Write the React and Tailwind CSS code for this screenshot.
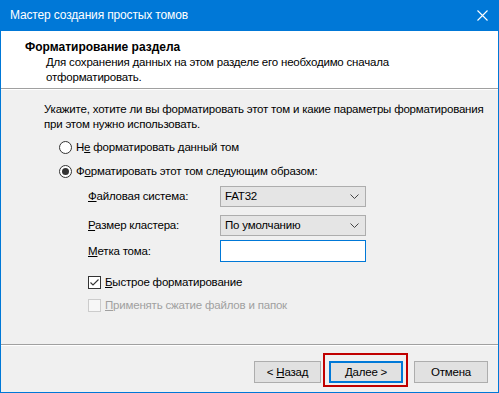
import { useState } from 'react'

function Radio({ checked }) {
  return (
    <span className="w-[13px] h-[13px] rounded-full border border-[#333] bg-white flex items-center justify-center shrink-0">
      {checked && <span className="w-[7px] h-[7px] rounded-full bg-[#333]" />}
    </span>
  )
}

function Checkbox({ checked, disabled }) {
  return (
    <span
      className={`w-[13px] h-[13px] border shrink-0 flex items-center justify-center ${
        disabled ? 'border-[#cccccc] bg-[#f7f7f7]' : 'border-[#333] bg-white'
      }`}
    >
      {checked && (
        <svg width="11" height="11" viewBox="0 0 11 11">
          <path d="M1.5 5.5 L4 8 L9.5 2.5" fill="none" stroke="#333" strokeWidth="1.1" />
        </svg>
      )}
    </span>
  )
}

function Select({ value }) {
  return (
    <div className="w-[146px] h-[21px] bg-[#e5e5e5] border border-[#adadad] flex items-center justify-between pl-[4px] pr-[6px]">
      <span>{value}</span>
      <svg width="9" height="5" viewBox="0 0 9 5">
        <path d="M0.5 0.5 L4.5 4.5 L8.5 0.5" fill="none" stroke="#444" strokeWidth="1" />
      </svg>
    </div>
  )
}

function Button({ children, primary, className = '' }) {
  return (
    <button
      className={`h-[22px] bg-[#e1e1e1] flex items-center justify-center ${className} ${
        primary ? 'border-2 border-[#0078d7]' : 'border border-[#adadad]'
      }`}
    >
      <span>{children}</span>
    </button>
  )
}

export default function App() {
  const [mode] = useState('format')

  return (
    <div
      className="w-[499px] h-[393px] flex flex-col border-x border-b border-[#0078d7] text-[11.5px] tracking-[-0.2px] leading-[15px] text-black bg-[#f0f0f0] relative whitespace-nowrap"
      style={{ fontFamily: '"Liberation Sans", Arial, sans-serif' }}
    >
      {/* title bar */}
      <div className="h-[31px] -mx-px bg-[#0078d7] flex items-center justify-between pl-[10px] pr-[11px] text-white text-[12px] tracking-[-0.15px]">
        <span>Мастер создания простых томов</span>
        <svg width="11" height="11" viewBox="0 0 11 11">
          <path d="M0.5 0.5 L10.5 10.5 M10.5 0.5 L0.5 10.5" stroke="#fff" strokeWidth="1.1" />
        </svg>
      </div>

      {/* header */}
      <div className="h-[58px] bg-white pt-[9px] pl-[24px] border-b border-[#a0a0a0]">
        <div className="font-bold text-[12px] tracking-normal">Форматирование раздела</div>
        <div className="pl-[21px]">
          Для сохранения данных на этом разделе его необходимо сначала
          <br />
          отформатировать.
        </div>
      </div>
      <div className="h-px bg-white" />

      {/* body */}
      <div className="flex-1 pt-[12px] pl-[43px]">
        <div>
          Укажите, хотите ли вы форматировать этот том и какие параметры форматирования
          <br />
          при этом нужно использовать.
        </div>

        <div className="mt-[3px] pl-[15px]">
          <div className="h-[24px] flex items-center gap-[4px]">
            <Radio checked={mode === 'skip'} />
            <span>
              Н<u>е</u> форматировать данный том
            </span>
          </div>
          <div className="h-[24px] flex items-center gap-[4px]">
            <Radio checked={mode === 'format'} />
            <span>
              Ф<u>о</u>рматировать этот том следующим образом:
            </span>
          </div>
        </div>

        <div className="pl-[44px]">
          <div className="mt-[3px] h-[21px] flex items-center">
            <span className="w-[132px]">
              <u>Ф</u>айловая система:
            </span>
            <Select value="FAT32" />
          </div>
          <div className="mt-[8px] h-[21px] flex items-center">
            <span className="w-[132px]">
              <u>Р</u>азмер кластера:
            </span>
            <Select value="По умолчанию" />
          </div>
          <div className="mt-[4px] h-[22px] flex items-center">
            <span className="w-[132px]">
              <u>М</u>етка тома:
            </span>
            <div className="w-[146px] h-[22px] bg-white border border-[#0078d7]" />
          </div>

          <div className="mt-[9px] h-[23px] flex items-center gap-[4px]">
            <Checkbox checked />
            <span>
              <u>Б</u>ыстрое форматирование
            </span>
          </div>
          <div className="h-[23px] flex items-center gap-[4px] text-[#a0a0a0]">
            <Checkbox disabled />
            <span>
              <u>П</u>рименять сжатие файлов и папок
            </span>
          </div>
        </div>
      </div>

      {/* footer */}
      <div className="h-px bg-[#a0a0a0]" />
      <div className="h-px bg-white" />
      <div className="h-[46px] flex items-start justify-end pt-[15px] pr-[10px]">
        <Button className="w-[67px]">
          &lt; <u>Н</u>азад
        </Button>
        <div className="relative ml-[8px]">
          <Button primary className="w-[74px]">
            <u>Д</u>алее &gt;
          </Button>
          <div className="absolute -left-[6px] -top-[8px] w-[85px] h-[34px] border-2 border-[#c00000] pointer-events-none" />
        </div>
        <Button className="w-[74px] ml-[11px]">Отмена</Button>
      </div>
    </div>
  )
}
